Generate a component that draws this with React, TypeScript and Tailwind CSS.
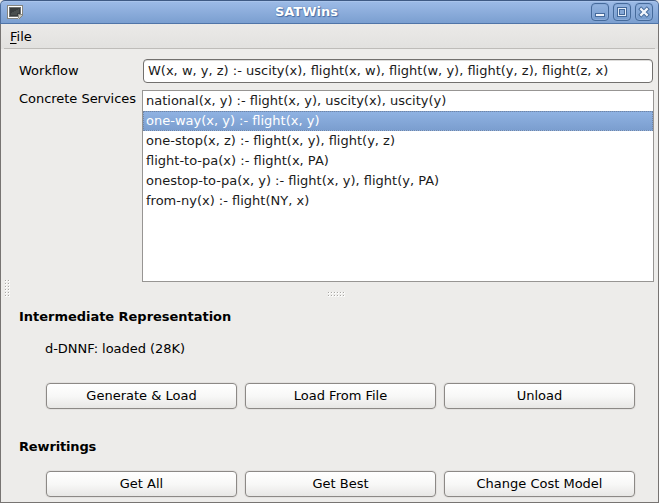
import React from "react";

const services = [
  "national(x, y) :- flight(x, y), uscity(x), uscity(y)",
  "one-way(x, y) :- flight(x, y)",
  "one-stop(x, z) :- flight(x, y), flight(y, z)",
  "flight-to-pa(x) :- flight(x, PA)",
  "onestop-to-pa(x, y) :- flight(x, y), flight(y, PA)",
  "from-ny(x) :- flight(NY, x)",
];

function WindowIcon() {
  return (
    <svg width="16" height="14" viewBox="0 0 16 14" shapeRendering="crispEdges">
      <path d="M0 0h16v10l-4 4H0z" fill="#85857f" />
      <path d="M1 1h14v9l-3 3H1z" fill="#fff" />
      <path d="M2 2h12v7h-3v3H2z" fill="#6e716f" />
      <path d="M3 3h10v6h-2v2H3z" fill="#393d3e" />
      <path d="M4 8l8-4v4h-2v2H4z" fill="#4b504f" />
      <path d="M11 10h4l-4 4z" fill="#c8c8c0" />
      <path d="M11 9h4v1h-3v3h-1z" fill="#8b8b84" />
    </svg>
  );
}

function WindowButton({ children, label }: { children: React.ReactNode; label: string }) {
  return (
    <button
      aria-label={label}
      className="flex h-[18px] w-[18px] items-center justify-center rounded-[4px] border border-[#456a9b] bg-linear-to-b from-[#93b3e0] to-[#759bcd] shadow-[inset_0_0_0_1px_#8aabd9,0_0_0_1px_#8aabd955]"
    >
      <svg width="16" height="16" viewBox="0 0 16 16">
        {children}
      </svg>
    </button>
  );
}

function PushButton({ children }: { children: React.ReactNode }) {
  return (
    <button className="flex h-[26px] w-[191px] items-center justify-center rounded-[4px] border border-[#8c8986] bg-linear-to-b from-white from-0% via-[#f8f8f7] via-50% to-[#e8e7e5] pb-px shadow-[0_0_0_1px_#e3e1df]">
      {children}
    </button>
  );
}

function Grip({ columns, rows }: { columns: number; rows: number }) {
  const dots = Array.from({ length: columns * rows }, (_, i) => [(i % columns) * 3, Math.floor(i / columns) * 3]);
  return (
    <svg width={columns * 3} height={rows * 3} shapeRendering="crispEdges">
      {dots.map(([x, y]) => (
        <g key={`${x}-${y}`}>
          <rect x={x} y={y} width="2" height="2" fill="#fbfbfa" />
          <rect x={x} y={y} width="1" height="1" fill="#a9a7a4" />
        </g>
      ))}
    </svg>
  );
}

export default function App() {
  return (
    <div className="flex h-[503px] w-[659px] flex-col overflow-hidden bg-[#edecea] font-['DejaVu_Sans',sans-serif] text-[13px] leading-[20px] text-black">
      <header className="flex h-6 shrink-0 items-center rounded-t-[5px] border border-x-[#4d6d9c] border-t-[#3f5a84] border-b-[#5075a8] bg-linear-to-b from-[#9dbbe7] to-[#7b9fd0] pr-[5px] pl-[6px] shadow-[inset_0_1px_0_#a9c4eb]">
        <WindowIcon />
        <h1 className="flex-1 pr-[1px] text-center text-[13px] font-bold text-white [text-shadow:0_0_1px_#3d629a,1px_1px_1px_#4a6fa5]">
          SATWins
        </h1>
        <div className="flex gap-1">
          <WindowButton label="Minimize">
            <rect x="3.5" y="9.5" width="9" height="3" fill="#f2f6fc" stroke="#456a9b" />
          </WindowButton>
          <WindowButton label="Maximize">
            <rect x="3.5" y="3.5" width="9" height="9" fill="#e3ecf8" stroke="#456a9b" />
            <rect x="5.5" y="5.5" width="5" height="5" fill="#86a8d6" stroke="#456a9b" />
          </WindowButton>
          <WindowButton label="Close">
            <path d="M5.2 5.2l5.6 5.6M10.8 5.2l-5.6 5.6" stroke="#456a9b" strokeWidth="4.2" strokeLinecap="square" />
            <path d="M5.2 5.2l5.6 5.6M10.8 5.2l-5.6 5.6" stroke="#f2f6fc" strokeWidth="2.3" strokeLinecap="square" />
          </WindowButton>
        </div>
      </header>

      <div className="flex flex-1 flex-col border-x border-b border-[#777472]">
        <nav className="flex h-[25px] shrink-0 bg-linear-to-b from-[#ebeae8] to-[#e2e1df] px-[3px]">
          <div className="flex-1 border-b border-[#bebcb9] pt-[3px] pl-[6px]">
            <span className="underline decoration-1 underline-offset-2">F</span>ile
          </div>
        </nav>

        <main className="flex flex-1 flex-col">
          <div className="mt-[10px] flex h-[25px] pl-[18px]">
            <label className="w-[124px] pt-[2px]">Workflow</label>
            <div className="h-[24px] w-[510px] rounded-[4px] border border-[#72706e] bg-white pt-px pl-[4px] whitespace-pre text-[#1a1a1a] shadow-[inset_0_1px_0_#dddcda]">
              W(x, w, y, z) :- uscity(x), flight(x, w), flight(w, y), flight(y, z), flight(z, x)
            </div>
          </div>

          <div className="mt-[6px] flex h-[192px] pl-[18px]">
            <label className="-mt-[1px] w-[123px] tracking-[-0.03px] whitespace-nowrap">Concrete Services</label>
            <ul className="h-[192px] w-[512px] border border-[#979593] bg-white text-[#1a1a1a]">
              {services.map((service, i) => (
                <li
                  key={service}
                  className={
                    i === 1
                      ? "h-5 border border-dotted border-[#7286a5] bg-linear-to-b from-[#8fb2e2] to-[#7b9ecf] pl-[2px] leading-[18px] text-white"
                      : "h-5 pl-[3px]"
                  }
                >
                  {service}
                </li>
              ))}
            </ul>
          </div>

          <div className="flex h-[25px] items-start pl-[4px]">
            <div className="-mt-[2px]">
              <Grip columns={2} rows={6} />
            </div>
            <div className="mt-[10px] ml-[317px]">
              <Grip columns={6} rows={2} />
            </div>
          </div>

          <section className="pl-[18px]">
            <h2 className="text-[13px] font-bold tracking-[-0.03px]">Intermediate Representation</h2>
            <p className="mt-[12px] pl-[26px] tracking-[-0.04px]">d-DNNF: loaded (28K)</p>
            <div className="mt-[24px] flex gap-[8px] pl-[27px]">
              <PushButton>Generate &amp; Load</PushButton>
              <PushButton>Load From File</PushButton>
              <PushButton>Unload</PushButton>
            </div>
          </section>

          <section className="mt-[28px] pl-[18px]">
            <h2 className="text-[13px] font-bold tracking-[-0.15px]">Rewritings</h2>
            <div className="mt-[14px] flex gap-[8px] pl-[27px]">
              <PushButton>Get All</PushButton>
              <PushButton>Get Best</PushButton>
              <PushButton>Change Cost Model</PushButton>
            </div>
          </section>
        </main>
      </div>
    </div>
  );
}
